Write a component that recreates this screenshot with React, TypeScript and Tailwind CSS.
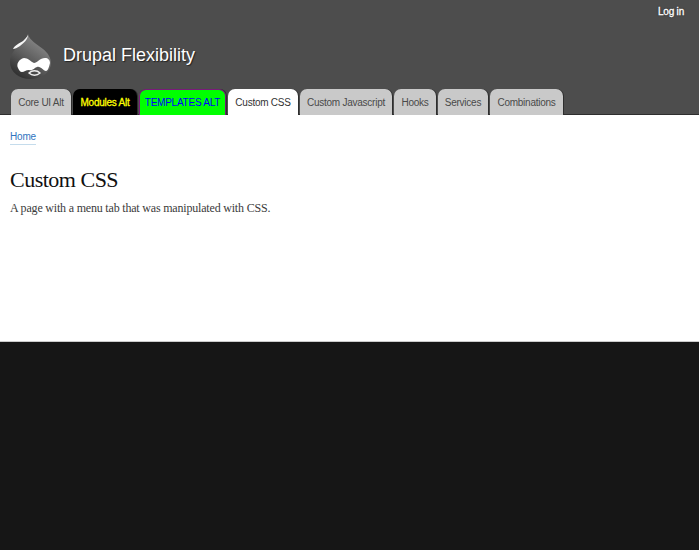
import React from "react";

const tabs = [
  { label: "Core UI Alt", cls: "w-[60px] bg-[#c9c9c9] text-[#4a4a4a]" },
  { label: "Modules Alt", cls: "w-[64px] bg-black text-[#ffff00] [-webkit-text-stroke:0.3px_#ffff00]" },
  { label: "TEMPLATES ALT", cls: "w-[87px] bg-[#00ff00] text-[#0000ff] border-t border-x border-[#7a1a7a] tracking-[-0.5px]" },
  { label: "Custom CSS", cls: "w-[70px] bg-white text-[#333]" },
  { label: "Custom Javascript", cls: "w-[92px] bg-[#c9c9c9] text-[#4a4a4a]" },
  { label: "Hooks", cls: "w-[42px] bg-[#c9c9c9] text-[#4a4a4a]" },
  { label: "Services", cls: "w-[50px] bg-[#c9c9c9] text-[#4a4a4a]" },
  { label: "Combinations", cls: "w-[73px] bg-[#c9c9c9] text-[#4a4a4a]" },
];

function DrupalLogo() {
  return (
    <svg width="41" height="45" viewBox="0 0 41 45" className="block">
      <defs>
        <linearGradient id="drop" x1="0.7" y1="0.1" x2="0.2" y2="0.9">
          <stop offset="0" stopColor="#8a8a8a" />
          <stop offset="0.55" stopColor="#5c5c5c" />
          <stop offset="1" stopColor="#333" />
        </linearGradient>
      </defs>
      <path d="M18 0 C19 6 27 10 33 15 C38 19 41 24 41 29 C41 38 32 45 20 45 C9 45 0 38 0 28 C0 20 5 15 10 11 C14 8 17 5 18 0 Z" fill="url(#drop)" />
      <path d="M18 1 C18 5 14 9 10 12 C7 14 5 15 3 15 C5 11 10 9 13 7 C15 5 17 3 18 1 Z" fill="#f6f6f6" />
      <path d="M8 34 C6 30 9 25 14 24 C18 24 20 27 24 29 C27 29 30 24 35 24 C38 24 40 26 40 29 C39 33 38 37 36 37 C33 37 31 32 27 33 C24 34 23 37 19 36 C16 36 14 38 12 38 C10 38 9 36 8 34 Z" fill="#fff" />
      <path d="M19 39 C22 36 27 36 30 39 C27 42 22 42 19 39 Z" fill="none" stroke="#eee" strokeWidth="1.4" />
    </svg>
  );
}

export default function App() {
  return (
    <div className="min-h-[550px] bg-[#161616] font-['Liberation_Sans',Arial,sans-serif]">
      <header className="h-[115px] bg-[#4d4d4d] flex flex-col shadow-[inset_0_-1px_0_#2e2e2e]">
        <div className="flex justify-end pt-[5px] pr-[15px] h-[34px]">
          <a className="text-[10px] leading-[14px] tracking-[-0.2px] text-white [-webkit-text-stroke:0.3px_#fff] [text-shadow:0_0_2px_#222]">Log in</a>
        </div>
        <div className="flex items-start pl-[10px] h-[55px]">
          <DrupalLogo />
          <div className="ml-[12px] mt-[9px] text-[18px] leading-[24px] text-white [text-shadow:1px_1px_1px_#222]">
            Drupal Flexibility
          </div>
        </div>
        <nav className="flex pl-[11px] gap-[2px] h-[26px]">
          {tabs.map((tab) => (
            <a
              key={tab.label}
              className={`h-[26px] rounded-t-[7px] flex items-center justify-center text-[10px] tracking-[-0.25px] whitespace-nowrap shadow-[1px_0_0_#2e2e2e] ${tab.cls}`}
            >
              {tab.label}
            </a>
          ))}
        </nav>
      </header>
      <main className="h-[227px] bg-white px-[10px] pt-[15px] border-b border-[#ccc]">
        <a className="block w-fit text-[10px] leading-[14px] tracking-[-0.2px] text-[#2f74c0] border-b border-[#c5dcec]">Home</a>
        <h1 className="mt-[21px] font-['Liberation_Serif',serif] text-[22px] leading-[28px] tracking-[-0.5px] text-[#111]">Custom CSS</h1>
        <p className="mt-[5px] font-['Liberation_Serif',serif] text-[12px] leading-[18px] tracking-[-0.19px] text-[#3b3b3b]">
          A page with a menu tab that was manipulated with CSS.
        </p>
      </main>
    </div>
  );
}
